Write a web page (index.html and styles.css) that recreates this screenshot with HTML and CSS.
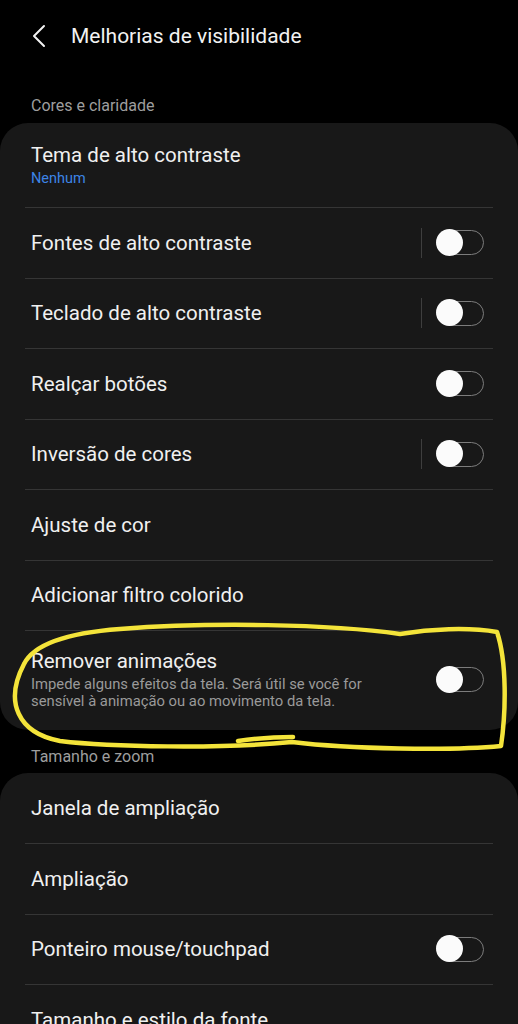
FILE: index.html
```html
<!DOCTYPE html>
<html lang="pt">

<head>
    <meta charset="UTF-8">
    <meta name="viewport" content="width=device-width, initial-scale=1.0">
    <title>Melhorias de visibilidade</title>
    <link rel="stylesheet" href="styles.css">
</head>
<body>
    <div id="screen">
        <div class="header">
            <svg class="back" width="16" height="24" viewBox="0 0 16 24">
                <path d="M13 2 L3 12 L13 22" fill="none" stroke="#f2f2f2" stroke-width="2" stroke-linecap="round" stroke-linejoin="round"/>
            </svg>
            <span class="title">Melhorias de visibilidade</span>
        </div>

        <div class="label label-first">Cores e claridade</div>
        <div class="card">
            <div class="row row-tall">
                <div class="text">
                    <div class="name">Tema de alto contraste</div>
                    <div class="value">Nenhum</div>
                </div>
            </div>
            <div class="row">
                <div class="text"><div class="name">Fontes de alto contraste</div></div>
                <span class="sep"></span>
                <span class="switch"><i></i></span>
            </div>
            <div class="row">
                <div class="text"><div class="name">Teclado de alto contraste</div></div>
                <span class="sep"></span>
                <span class="switch"><i></i></span>
            </div>
            <div class="row">
                <div class="text"><div class="name">Realçar botões</div></div>
                <span class="switch"><i></i></span>
            </div>
            <div class="row">
                <div class="text"><div class="name">Inversão de cores</div></div>
                <span class="sep"></span>
                <span class="switch"><i></i></span>
            </div>
            <div class="row">
                <div class="text"><div class="name">Ajuste de cor</div></div>
            </div>
            <div class="row">
                <div class="text"><div class="name">Adicionar filtro colorido</div></div>
            </div>
            <div class="row row-desc">
                <div class="text">
                    <div class="name">Remover animações</div>
                    <div class="desc">Impede alguns efeitos da tela. Será útil se você for sensível à animação ou ao movimento da tela.</div>
                </div>
                <span class="switch"><i></i></span>
            </div>
        </div>

        <div class="label label-second">Tamanho e zoom</div>
        <div class="card">
            <div class="row">
                <div class="text"><div class="name">Janela de ampliação</div></div>
            </div>
            <div class="row">
                <div class="text"><div class="name">Ampliação</div></div>
            </div>
            <div class="row">
                <div class="text"><div class="name">Ponteiro mouse/touchpad</div></div>
                <span class="switch"><i></i></span>
            </div>
            <div class="row">
                <div class="text"><div class="name">Tamanho e estilo da fonte</div></div>
            </div>
        </div>

        <!-- marcação à mão por cima do print -->
        <svg class="scribble" width="518" height="1024" viewBox="0 0 518 1024">
            <path d="M24 664 C34 644 66 633 120 629 C210 622 330 624 400 634 C430 629 468 627 497 632 C507 662 506 712 501 746 C450 751 350 749 292 742 C220 749 110 747 60 741 C18 733 4 702 24 664 Z" fill="none" stroke="#f4e43a" stroke-width="4.5" stroke-linejoin="round"/>
            <path d="M293 737 C272 737 252 739 238 741" fill="none" stroke="#f4e43a" stroke-width="4.5" stroke-linecap="round"/>
        </svg>
    </div>
</body>
</html>
```

FILE: styles.css
```css
*{
    margin: 0;
    padding: 0;
    box-sizing: border-box;
}
body{
    background: #000000;
    font-family: Roboto, "Noto Sans", "Liberation Sans", sans-serif;
    color: #f0f0f0;
}

#screen{
    width: 518px;
    height: 1024px;
    position: relative;
    overflow: hidden;
}

.header{
    height: 72px;
    display: flex;
    align-items: center;
    padding-left: 31px;
}
.back{
    margin-right: 24px;
}
.title{
    font-size: 21px;
    color: #f2f2f2;
}

.label{
    font-size: 16px;
    line-height: 20px;
    color: #9e9e9e;
    padding-left: 31px;
}
.label-first{
    padding-top: 24px;
    padding-bottom: 7px;
}
.label-second{
    padding-top: 17px;
    padding-bottom: 6px;
}

.card{
    background: #181818;
    border-radius: 28px;
}

.row{
    height: 70.5px;
    margin: 0 25px;
    padding: 0 9px 0 6px;
    display: flex;
    align-items: center;
}
.row + .row{
    border-top: 1px solid #353535;
}
.card > .row:first-child{
    height: 70px;
}
.row-tall{
    height: 84px !important;
    padding-top: 2px;
}
.row-desc{
    height: 100px;
    padding-bottom: 2px;
}

.text{
    flex: 1;
}
.name{
    font-size: 20.5px;
    line-height: 24px;
    color: #f0f0f0;
}
.value{
    font-size: 14.5px;
    line-height: 20px;
    color: #3d84e6;
    margin-top: 2px;
}
.desc{
    font-size: 14.8px;
    line-height: 17px;
    color: #9a9a9a;
    padding-right: 30px;
    margin-top: 3px;
}

.sep{
    width: 1px;
    height: 30px;
    background: #3e3e3e;
    margin-right: 15px;
}

.switch{
    width: 47px;
    height: 25px;
    border: 1.5px solid #7c7c7c;
    border-radius: 13px;
    position: relative;
    flex-shrink: 0;
}
.switch i{
    position: absolute;
    left: -2px;
    top: -2.5px;
    width: 27px;
    height: 27px;
    border-radius: 50%;
    background: #fbfbfb;
}

.scribble{
    position: absolute;
    left: 0;
    top: 0;
    pointer-events: none;
}
```
